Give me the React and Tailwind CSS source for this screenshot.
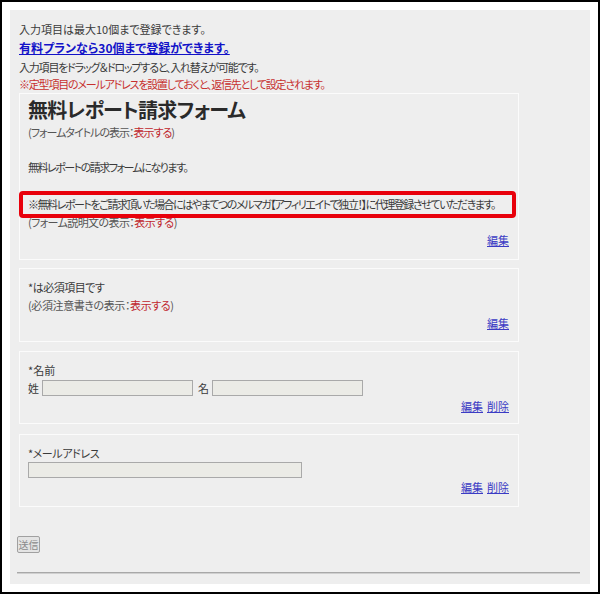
const jp = "font-['Noto_Sans_CJK_JP','Noto_Sans',sans-serif] [font-feature-settings:'palt']";

function FieldBox({ children, className = '', links = ['編集'] }) {
  return (
    <div className={`relative w-[500px] border border-[#fbfbfb] pl-[8px] pr-[9px] ${className}`}>
      {children}
      <div className="flex justify-end gap-[4px] leading-[18px]">
        {links.map((l) => (
          <a key={l} href="#" className="text-[11px] text-[#3b3bc4] underline">
            {l}
          </a>
        ))}
      </div>
    </div>
  );
}

function Shown({ label, className = '' }) {
  return (
    <p className={`text-[#555] ${className}`}>
      ({label}：<span className="text-[#c0272d]">表示する</span>)
    </p>
  );
}

export default function App() {
  return (
    <div className={`w-[600px] h-[594px] bg-white border-2 border-black p-[8px] ${jp}`}>
      <div className="h-full bg-[#eeeeee] pl-[9px] pr-[9px] pt-[10px] text-[11px] leading-[18px] text-[#3a3a3a]">
        <p>入力項目は最大10個まで登録できます。</p>
        <p className="leading-[20px]">
          <a href="#" className="text-[12px] font-bold text-[#1212c8] underline">
            有料プランなら30個まで登録ができます。
          </a>
        </p>
        <p className="tracking-[-1.2px]">入力項目をドラッグ＆ドロップすると、入れ替えが可能です。</p>
        <p className="leading-[16px] tracking-[-1.2px] text-[#c7302e]">
          ※定型項目のメールアドレスを設置しておくと、返信先として設定されます。
        </p>

        <FieldBox className="mt-[1px] pt-[6px] pb-[10px]">
          <h1 className="text-[20px] font-bold leading-[20px] tracking-[-0.7px] text-[#2a2a2a]">
            無料レポート請求フォーム
          </h1>
          <Shown label="フォームタイトルの表示" className="mt-[4px] leading-[16px] tracking-[-1px]" />
          <div className="mt-[18px]">
            <p className="tracking-[-1.5px]">無料レポートの請求フォームになります。</p>
            <p className="mt-[19px] whitespace-nowrap tracking-[-1.45px]">
              ※無料レポートをご請求頂いた場合にはやまてつのメルマガ【アフィリエイトで独立！】に代理登録させていただきます。
            </p>
          </div>
          <Shown label="フォーム説明文の表示" className="tracking-[-0.6px]" />
          <div className="absolute left-[-1px] top-[97px] w-[497px] h-[27px] rounded-[4px] border-4 border-[#e8000b]" />
        </FieldBox>

        <FieldBox className="mt-[8px] pt-[9px] pb-[9px]">
          <p className="tracking-[-0.5px]">*は必須項目です</p>
          <Shown label="必須注意書きの表示" className="tracking-[-0.4px]" />
        </FieldBox>

        <FieldBox className="mt-[9px] pt-[9px] pb-[8px]" links={['編集', '削除']}>
          <p>*名前</p>
          <div className="flex items-center h-[18px]">
            <span className="w-[14px]">姓</span>
            <input disabled className="w-[151px] h-[16px] border border-[#a9a9a9] bg-[#ebebe6]" />
            <span className="ml-[5px] w-[14px]">名</span>
            <input disabled className="w-[151px] h-[16px] border border-[#a9a9a9] bg-[#ebebe6]" />
          </div>
        </FieldBox>

        <FieldBox className="mt-[10px] pt-[9px] pb-[10px]" links={['編集', '削除']}>
          <p className="tracking-[-0.4px]">*メールアドレス</p>
          <input disabled className="block w-[274px] h-[16px] border border-[#a9a9a9] bg-[#ebebe6]" />
        </FieldBox>

        <button
          disabled
          className="mt-[29px] -ml-[2px] block w-[23px] h-[17px] whitespace-nowrap rounded-[2px] border border-[#a0a0a0] bg-[#e4e4e4] text-[10px] leading-[15px] text-[#8a8a8a]"
        >
          送信
        </button>

        <div className="mt-[19px] -ml-[2px] w-[563px] h-[2px] border-t border-[#a8a8a8] border-b border-b-[#cfcfcf]" />
      </div>
    </div>
  );
}
